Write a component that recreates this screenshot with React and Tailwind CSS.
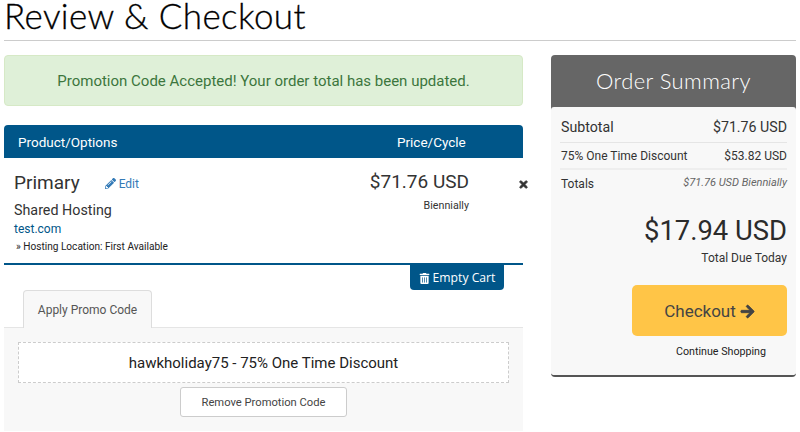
import React from "react";
import { FaPencilAlt, FaTimes, FaTrashAlt, FaArrowRight } from "react-icons/fa";

const roboto = "font-['Roboto','Liberation_Sans',sans-serif]";

export default function App() {
  return (
    <div className={`${roboto} w-[800px] h-[432px] overflow-hidden bg-white text-[#333] pl-[4px] pr-[4px]`}>
      <div className="h-[41px] border-b border-[#ccc]">
        <h1 className="font-['Lato',sans-serif] font-light text-[35px] leading-[30px] text-black tracking-[0.4px] whitespace-nowrap [-webkit-text-stroke:0.3px_black]">Review &amp; Checkout</h1>
      </div>
      <div className="flex mt-[14px] items-start">
        <div className="w-[519px] shrink-0">
          <div className="h-[51px] rounded-[4px] bg-[#dff0d8] border border-[#d6e9c6] flex items-center justify-center text-[#3c763d] text-[15px] pt-[2px]">
            Promotion Code Accepted! Your order total has been updated.
          </div>
          <div className="mt-[19px] h-[33px] bg-[#005689] rounded-t-[4px] flex items-center text-white text-[13.5px] pl-[14px] pt-[2px]">
            <span className="w-[379px]">Product/Options</span>
            <span>Price/Cycle</span>
          </div>
          <div className="relative h-[107px] border-b-2 border-[#005689] pl-[10px] pr-[54px] flex justify-between">
            <div>
              <div className="flex items-baseline mt-[13px] h-[24px]">
                <span className="text-[19px] leading-[24px]">Primary</span>
                <span className="ml-[25px] text-[12px] text-[#337ab7] flex items-center gap-[3px]"><FaPencilAlt className="text-[11px]" />Edit</span>
              </div>
              <div className="text-[14.3px] leading-[20px] mt-[5px]">Shared Hosting</div>
              <div className="text-[12px] leading-[16px] mt-[1px] text-[#005689]">test.com</div>
              <div className="text-[10.1px] leading-[14px] mt-[3px] pl-[2px] text-[#222]">» Hosting Location: First Available</div>
            </div>
            <div className="text-right">
              <div className="text-[19px] leading-[24px] mt-[12px]">$71.76 USD</div>
              <div className="text-[10.7px] leading-[14px] mt-[5px]">Biennially</div>
            </div>
            <FaTimes className="absolute right-[-6px] top-[21px] text-[11px] text-[#333] stroke-[40px]" />
          </div>
          <div className="flex justify-end pr-[19px]">
            <div className="w-[94px] h-[25px] bg-[#005689] rounded-b-[4px] text-white text-[12.2px] font-['Open_Sans',sans-serif] flex items-center justify-center gap-[3px] pt-[1px]">
              <FaTrashAlt className="text-[11px]" />Empty Cart
            </div>
          </div>
          <div className="pl-[19px] mt-[-1px] h-[38px] flex items-end">
            <div className="w-[129px] h-[38px] bg-[#f8f8f8] border border-b-0 border-[#ddd] rounded-t-[4px] flex items-center justify-center text-[12px] text-[#555] relative top-[1px]">Apply Promo Code</div>
          </div>
          <div className="h-[104px] bg-[#f8f8f8] border-t border-[#e5e5e5] px-[14px] pt-[14px]">
            <div className="h-[41px] bg-white border border-dashed border-[#ccc] flex items-center justify-center text-[15px] text-[#222] pt-[1px]">hawkholiday75 - 75% One Time Discount</div>
            <div className="flex justify-center mt-[4px]">
              <div className="w-[167px] h-[30px] bg-white border border-[#ccc] rounded-[3px] flex items-center justify-center text-[11.2px] text-[#444] pt-[3px]">Remove Promotion Code</div>
            </div>
          </div>
        </div>
        <div className="ml-[28px] w-[245px] rounded-[4px] border-b-2 border-[#555] bg-[#666] overflow-hidden h-[322px] flex flex-col">
          <div className="h-[52px] shrink-0 flex items-center justify-center text-white font-['Lato',sans-serif] font-light text-[22px] tracking-[0.4px] pb-[1px]">Order Summary</div>
          <div className="grow bg-[#f8f8f8] rounded-t-[3px] px-[9px] pt-[1px]">
            <div className="h-[35px] border-b border-[#e5e5e5] flex items-center justify-between text-[14.2px] pt-[5px] pl-[1px]"><span>Subtotal</span><span>$71.76 USD</span></div>
            <div className="h-[27px] border-b-2 border-[#eee] flex items-center justify-between text-[12px] pl-[1px]"><span>75% One Time Discount</span><span>$53.82 USD</span></div>
            <div className="h-[27px] flex items-center justify-between pl-[1px]"><span className="text-[12px]">Totals</span><span className="text-[11px] italic text-[#666]">$71.76 USD Biennially</span></div>
            <div className="text-right text-[27.4px] leading-[32px] mt-[18px] text-[#2b2b2b]">$17.94 USD</div>
            <div className="text-right text-[12px] leading-[14px] mt-[4px]">Total Due Today</div>
            <div className="flex justify-end mt-[20px]">
              <div className="w-[155px] h-[51px] bg-[#ffc547] rounded-[5px] flex items-center justify-center gap-[4px] text-[17px] text-[#444] pt-[2px]">Checkout<FaArrowRight className="text-[15px] stroke-[30px]" /></div>
            </div>
            <div className="flex justify-end pr-[21px] mt-[8px] text-[10.7px] text-[#222]">Continue Shopping</div>
          </div>
        </div>
      </div>
    </div>
  );
}
